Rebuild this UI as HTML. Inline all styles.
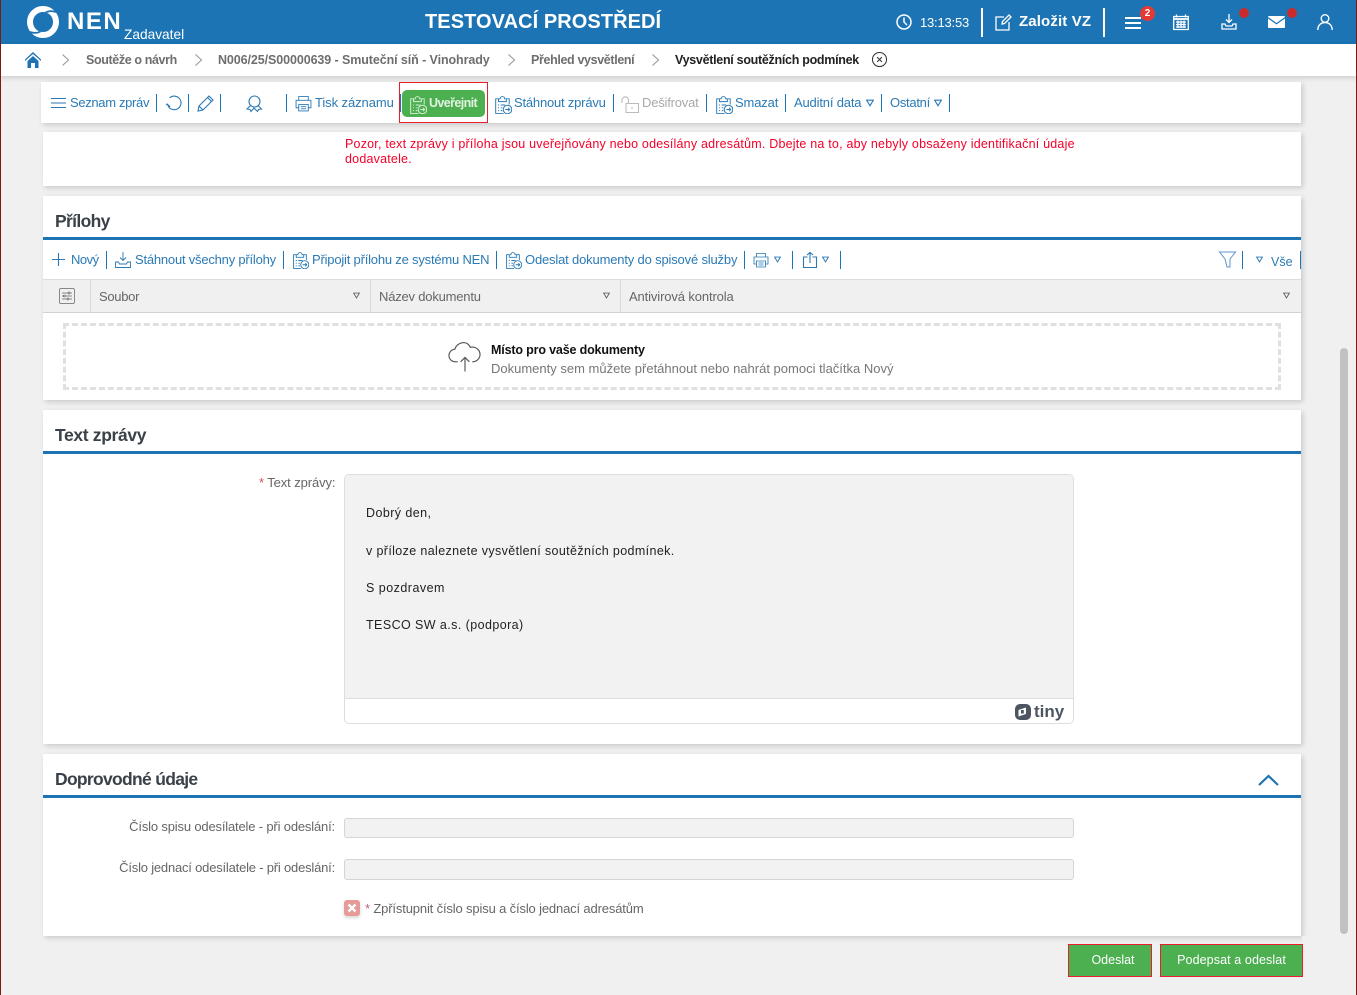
<!DOCTYPE html>
<html lang="cs"><head><meta charset="utf-8"><title>NEN</title>
<style>
html,body{margin:0;padding:0}
body{width:1357px;height:995px;overflow:hidden;position:relative;background:#f0f0f0;font-family:"Liberation Sans",sans-serif;font-size:13px;color:#666}
.a,.t,svg.i,.s{position:absolute}
.t{white-space:nowrap;line-height:16px}
.b{color:#2a7ab5}
.s{width:1px;height:18px;background:#1c74b4}
.h{font-size:17.5px;font-weight:bold;color:#3a4149;line-height:22px}
.bc{font-weight:bold;font-size:12.5px;color:#6e6e6e}
.msg{color:#222;font-size:12.5px}
.panel{position:absolute;background:#fff;box-shadow:2px 2px 5px rgba(0,0,0,.16)}
.line{position:absolute;height:3px;background:#1c74b4}
svg.i{fill:none;stroke:#2a7ab5;stroke-width:1.1;overflow:visible}
.c{stroke-width:.85 !important}
.btn{position:absolute;box-sizing:border-box;background:#4caf50;border:1px solid #ed1c2e;color:#fff;text-align:center;font-size:12.5px;line-height:30px}
.inp{position:absolute;left:344px;width:730px;height:20px;box-sizing:border-box;background:#f2f2f2;border:1px solid #d5d5d5;border-radius:3px}
</style></head><body>
<svg width="0" height="0" style="position:absolute"><defs>
<symbol id="clip" viewBox="0 0 16 16"><path d="M4 2.500H1.500v13h7M11 2.500h2.500v5M4 2.500h1.500a2 2 0 0 1 4 0H11V5H4zM3.500 8h1M3.500 10.500h1M3.500 13h1M6 8h4M6 10.500h1.500M6 13h1.500"/><circle cx="12" cy="12" r="3.800"/><path d="M10 12h4M12.500 10.500 14 12l-1.500 1.500"/></symbol>
<symbol id="print" viewBox="0 0 16 16"><path d="M3.500 5V1.500h9V5M3.500 12H1V5h14v7h-2.500M3.500 9h9v6h-9zM5.500 11h5M5.500 13h5"/></symbol>
<symbol id="tri" viewBox="0 0 8 8"><path d="M.7 1.200h6.600L4 6.800z"/></symbol>
</defs></svg>

<!-- Header -->
<div class="a" style="left:0;top:0;width:1357px;height:44px;background:#1c74b4"></div>
<svg class="i" style="left:26px;top:5px;stroke:none" width="34" height="34" viewBox="0 0 34 34"><circle cx="17" cy="17" r="13" fill="none" stroke="#fff" stroke-width="6"/><path d="M30 7Q24 5 19.500 7.500M4 27Q10 29 14.500 26.500" fill="none" stroke="#1c74b4" stroke-width="1.800"/></svg>
<div class="t" style="left:67px;top:9px;font-size:24px;line-height:26px;font-weight:bold;color:#fff;letter-spacing:1.500px">NEN</div>
<div class="t" style="left:124px;top:27px;font-size:13.700px;color:#fff">Zadavatel</div>
<div class="t" style="left:425px;top:10px;font-size:20px;line-height:24px;font-weight:bold;color:#fff;letter-spacing:.07px">TESTOVACÍ PROSTŘEDÍ</div>
<svg class="i" style="left:896px;top:14px;stroke:#fff;stroke-width:1.500" width="16" height="16" viewBox="0 0 16 16"><circle cx="8" cy="8" r="7"/><path d="M8 3.500V8l3 3"/></svg>
<div class="t" style="left:920px;top:15px;color:#fff;letter-spacing:-.2px">13:13:53</div>
<div class="a" style="left:981px;top:8px;width:2px;height:29px;background:#fff"></div>
<svg class="i" style="left:995px;top:14px;stroke:#fff;stroke-width:1.300" width="17" height="17" viewBox="0 0 17 17"><path d="M9 3H1v13h13V8M7 10l.500-2.500L14 1l2 2-6.500 6.500z"/></svg>
<div class="t" style="left:1019px;top:13px;font-size:15px;line-height:18px;font-weight:bold;color:#fff;letter-spacing:.13px">Založit VZ</div>
<div class="a" style="left:1103px;top:8px;width:2px;height:29px;background:#fff"></div>
<div class="a" style="left:1125px;top:17px;width:16px;height:2px;background:#fff;box-shadow:0 5px 0 #fff,0 10px 0 #fff"></div>
<div class="a" style="left:1140px;top:6px;width:15px;height:15px;border-radius:50%;background:#e53935;color:#fff;font-size:10px;font-weight:bold;line-height:15px;text-align:center">2</div>
<svg class="i" style="left:1173px;top:14px;stroke:#fff;stroke-width:1.300" width="16" height="16" viewBox="0 0 16 16"><path d="M.7 2.500h14.600v13H.7zM3.500.5v3M12.500.5v3" /><path d="M.7 5h14.600" stroke-width="1.800"/><path d="M3 8h10M3 10.500h10M3 13h10M5 6.500V14M8 6.500V14M11 6.500V14"/></svg>
<svg class="i" style="left:1221px;top:14px;stroke:#fff;stroke-width:1.300" width="16" height="16" viewBox="0 0 16 16"><path d="M8 0v8M5 5.500 8 8.500l3-3M1 10v5h14v-5h-3l-1 2H5l-1-2z"/></svg>
<div class="a" style="left:1239px;top:8px;width:10px;height:10px;border-radius:50%;background:#cc2b2b"></div>
<svg class="i" style="left:1268px;top:16px;stroke:none" width="17" height="12" viewBox="0 0 17 12"><path d="M1 0h15a1 1 0 0 1 1 1L8.500 7 0 1a1 1 0 0 1 1-1zM0 2.500l8.500 6 8.500-6V11a1 1 0 0 1-1 1H1a1 1 0 0 1-1-1z" fill="#fff"/></svg>
<div class="a" style="left:1287px;top:8px;width:10px;height:10px;border-radius:50%;background:#cc2b2b"></div>
<svg class="i" style="left:1317px;top:14px;stroke:#fff;stroke-width:1.400" width="16" height="16" viewBox="0 0 16 16"><circle cx="8" cy="4.500" r="3.800"/><path d="M.8 16c0-4.500 3-7.500 7.200-7.500s7.200 3 7.200 7.500"/></svg>

<!-- Breadcrumb -->
<div class="a" style="left:0;top:44px;width:1357px;height:32px;background:#fff;box-shadow:0 2px 5px rgba(0,0,0,.15)"></div>
<svg class="i" style="left:25px;top:52px;stroke:none" width="16" height="16" viewBox="0 0 16 16"><path d="M8 0 0 7.500v1.500L8 2l8 7V7.500z" fill="#1c74b4"/><path d="M2.500 9 8 4l5.500 5v7H10v-5H6v5H2.500z" fill="#1c74b4"/></svg>
<svg class="i" style="left:62px;top:54px;stroke:#999" width="7" height="12" viewBox="0 0 7 12"><path d="m.5.500 6 5.500-6 5.500"/></svg>
<div class="t bc" style="left:86px;top:52px;letter-spacing:-.38px">Soutěže o návrh</div>
<svg class="i" style="left:195px;top:54px;stroke:#999" width="7" height="12" viewBox="0 0 7 12"><path d="m.5.500 6 5.500-6 5.500"/></svg>
<div class="t bc" style="left:218px;top:52px;letter-spacing:-.09px">N006/25/S00000639 - Smuteční síň - Vinohrady</div>
<svg class="i" style="left:508px;top:54px;stroke:#999" width="7" height="12" viewBox="0 0 7 12"><path d="m.5.500 6 5.500-6 5.500"/></svg>
<div class="t bc" style="left:531px;top:52px;letter-spacing:-.36px">Přehled vysvětlení</div>
<svg class="i" style="left:652px;top:54px;stroke:#999" width="7" height="12" viewBox="0 0 7 12"><path d="m.5.500 6 5.500-6 5.500"/></svg>
<div class="t bc" style="left:675px;top:52px;color:#222;letter-spacing:-.29px">Vysvětlení soutěžních podmínek</div>
<svg class="i" style="left:872px;top:52px;stroke:#333" width="15" height="15" viewBox="0 0 16 16"><circle cx="8" cy="8" r="7.500"/><path d="m5.500 5.500 5 5m0-5-5 5"/></svg>

<!-- Main toolbar -->
<div class="panel" style="left:41px;top:82px;width:1260px;height:41px"></div>
<div class="a" style="left:51px;top:98px;width:15px;height:1px;background:#2a7ab5;box-shadow:0 4.500px 0 #2a7ab5,0 9px 0 #2a7ab5"></div>
<div class="t b" style="left:70px;top:95px;letter-spacing:-.33px">Seznam zpráv</div>
<div class="s" style="left:156px;top:94px"></div>
<svg class="i" style="left:166px;top:95px" width="16" height="16" viewBox="0 0 16 16"><path d="M3.500 3a6.800 6.800 0 1 1-2 6M.8 8.800l3.200 3M.8 8.800l-.6 1"/></svg>
<div class="s" style="left:188px;top:94px"></div>
<svg class="i" style="left:197px;top:95px" width="17" height="17" viewBox="0 0 17 17"><path d="M1 16 2 11 12 1l4 4L6 15zM2 11l4 4M10.500 2.500l4 4"/></svg>
<div class="s" style="left:220px;top:94px"></div>
<svg class="i" style="left:246px;top:95px" width="17" height="17" viewBox="0 0 17 17"><circle cx="8.500" cy="6.500" r="5.500"/><path d="M4.500 10.500 1 14l3 .5 1 2 3-3.500 3.500 3.500 1-2 3-.5-3.500-3.500"/></svg>
<div class="s" style="left:286px;top:94px"></div>
<svg class="i c" style="left:295px;top:95px" width="17" height="17"><use href="#print"/></svg>
<div class="t b" style="left:315px;top:95px;letter-spacing:-.08px">Tisk záznamu</div>
<div class="s" style="left:400px;top:94px"></div>
<div class="a" style="left:399px;top:82px;width:87px;height:39px;border:1px solid #e5202e"></div>
<div class="a" style="left:402px;top:90px;width:83px;height:27px;border-radius:5px;background:#4caf50"></div>
<svg class="i c" style="left:409px;top:96px;stroke:#d9efd9" width="18" height="18" viewBox="0 0 16 16"><use href="#clip"/></svg>
<div class="t" style="left:429px;top:95px;font-size:12.500px;font-weight:bold;color:#e2f2e2;letter-spacing:-.6px">Uveřejnit</div>
<svg class="i c" style="left:494px;top:96px" width="18" height="18"><use href="#clip"/></svg>
<div class="t b" style="left:514px;top:95px;letter-spacing:-.2px">Stáhnout zprávu</div>
<div class="s" style="left:613px;top:94px"></div>
<svg class="i" style="left:621px;top:96px;stroke:#bbb" width="18" height="17" viewBox="0 0 18 17"><path d="M5 7.500h12.500v9H5zM1 7V4a3.200 3.200 0 0 1 6.400 0v3.500M11 11v2"/></svg>
<div class="t" style="left:642px;top:95px;color:#a9a9a9;letter-spacing:-.2px">Dešifrovat</div>
<div class="s" style="left:706px;top:94px"></div>
<svg class="i c" style="left:715px;top:96px" width="18" height="18"><use href="#clip"/></svg>
<div class="t b" style="left:735px;top:95px;letter-spacing:-.15px">Smazat</div>
<div class="s" style="left:785px;top:94px"></div>
<div class="t b" style="left:794px;top:95px;letter-spacing:-.17px">Auditní data</div>
<svg class="i" style="left:866px;top:99px" width="8" height="8"><use href="#tri"/></svg>
<div class="s" style="left:881px;top:94px"></div>
<div class="t b" style="left:890px;top:95px;letter-spacing:-.28px">Ostatní</div>
<svg class="i" style="left:934px;top:99px" width="8" height="8"><use href="#tri"/></svg>
<div class="s" style="left:949px;top:94px"></div>

<!-- Warning panel -->
<div class="panel" style="left:43px;top:132px;width:1258px;height:54px"></div>
<div class="t" style="left:345px;top:137px;color:#f4002a;font-size:12.500px;line-height:15px;letter-spacing:.205px">Pozor, text zprávy i příloha jsou uveřejňovány nebo odesílány adresátům. Dbejte na to, aby nebyly obsaženy identifikační údaje<br>dodavatele.</div>

<!-- Přílohy -->
<div class="panel" style="left:43px;top:196px;width:1258px;height:204px"></div>
<div class="t h" style="left:55px;top:210px;letter-spacing:-.65px">Přílohy</div>
<div class="line" style="left:43px;top:237px;width:1258px"></div>
<svg class="i" style="left:52px;top:253px" width="13" height="13" viewBox="0 0 13 13"><path d="M6.500 0v13M0 6.500h13"/></svg>
<div class="t b" style="left:71px;top:252px;letter-spacing:-.5px">Nový</div>
<div class="s" style="left:106px;top:251px"></div>
<svg class="i" style="left:115px;top:252px;stroke-width:.9" width="16" height="16" viewBox="0 0 16 16"><path d="M8 0v8M5 5.500 8 8.500l3-3M.5 10v5.500h15V10h-3l-1 2h-7l-1-2z"/></svg>
<div class="t b" style="left:135px;top:252px;letter-spacing:-.21px">Stáhnout všechny přílohy</div>
<div class="s" style="left:283px;top:251px"></div>
<svg class="i c" style="left:292px;top:252px" width="17" height="17"><use href="#clip"/></svg>
<div class="t b" style="left:312px;top:252px;letter-spacing:-.2px">Připojit přílohu ze systému NEN</div>
<div class="s" style="left:496px;top:251px"></div>
<svg class="i c" style="left:505px;top:252px" width="17" height="17"><use href="#clip"/></svg>
<div class="t b" style="left:525px;top:252px;letter-spacing:-.17px">Odeslat dokumenty do spisové služby</div>
<div class="s" style="left:744px;top:251px"></div>
<svg class="i c" style="left:753px;top:252px" width="16" height="16"><use href="#print"/></svg>
<svg class="i" style="left:774px;top:256px" width="7" height="7"><use href="#tri"/></svg>
<div class="s" style="left:792px;top:251px"></div>
<svg class="i" style="left:803px;top:252px" width="14" height="16" viewBox="0 0 14 16"><path d="M7 11V.5M4 3l3-2.500L10 3M4.500 5H.5v10.500h13V5h-4"/></svg>
<svg class="i" style="left:822px;top:256px" width="7" height="7"><use href="#tri"/></svg>
<div class="s" style="left:840px;top:251px"></div>
<svg class="i" style="left:1219px;top:251px;stroke-width:1;stroke:#5f93cd" width="17" height="17" viewBox="0 0 17 17"><path d="M.5 1h16L11 8v8H8L6 8z"/></svg>
<div class="s" style="left:1242px;top:251px"></div>
<svg class="i" style="left:1256px;top:256px" width="7" height="7"><use href="#tri"/></svg>
<div class="t b" style="left:1271px;top:254px;font-size:12.500px">Vše</div>
<div class="s" style="left:1300px;top:251px"></div>

<div class="a" style="left:43px;top:279px;width:1258px;height:34px;box-sizing:border-box;background:#f0f0f0;border-top:1px solid #dcdcdc;border-bottom:1px solid #d2d2d2"></div>
<div class="a" style="left:90px;top:280px;width:1px;height:32px;background:#d8d8d8"></div>
<div class="a" style="left:370px;top:280px;width:1px;height:32px;background:#d8d8d8"></div>
<div class="a" style="left:620px;top:280px;width:1px;height:32px;background:#d8d8d8"></div>
<svg class="i" style="left:59px;top:288px;stroke:#666;stroke-width:.75" width="16" height="16" viewBox="0 0 16 16"><rect x=".5" y=".5" width="15" height="15" rx="1.500"/><path d="M3 5h6M11.500 5H13M3 8h1.500M7 8h6M3 11h5M10.500 11H13"/><circle cx="10" cy="5" r="1"/><circle cx="5.500" cy="8" r="1"/><circle cx="9" cy="11" r="1"/></svg>
<div class="t" style="left:99px;top:289px;letter-spacing:-.3px">Soubor</div>
<svg class="i" style="left:353px;top:292px;stroke:#666" width="7" height="7"><use href="#tri"/></svg>
<div class="t" style="left:379px;top:289px;letter-spacing:-.2px">Název dokumentu</div>
<svg class="i" style="left:603px;top:292px;stroke:#666" width="7" height="7"><use href="#tri"/></svg>
<div class="t" style="left:629px;top:289px;letter-spacing:-.12px">Antivirová kontrola</div>
<svg class="i" style="left:1283px;top:292px;stroke:#666" width="7" height="7"><use href="#tri"/></svg>

<div class="a" style="left:63px;top:323px;width:1218px;height:67px;box-sizing:border-box;border:3px dashed #e0e0e0"></div>
<svg class="i" style="left:449px;top:339px;stroke:#555;stroke-width:1.200" width="32" height="33" viewBox="0 0 33 33"><path d="M9 23H7a6.500 6.500 0 0 1-1-13C8 3 18 0 22 8c6-1 10 3 10 7.500S28 23 24 23"/><path d="M16.500 33V19M12 23l4.500-4.500L21 23"/></svg>
<div class="t" style="left:491px;top:342px;font-weight:bold;font-size:12.500px;color:#111;letter-spacing:-.16px">Místo pro vaše dokumenty</div>
<div class="t" style="left:491px;top:361px;color:#777">Dokumenty sem můžete přetáhnout nebo nahrát pomoci tlačítka Nový</div>

<!-- Text zprávy -->
<div class="panel" style="left:43px;top:410px;width:1258px;height:334px"></div>
<div class="t h" style="left:55px;top:424px;letter-spacing:-.35px">Text zprávy</div>
<div class="line" style="left:43px;top:451px;width:1258px"></div>
<div class="t" style="left:259px;top:475px;width:76px;text-align:right;letter-spacing:-.1px"><span style="color:#d9534f">*</span> Text zprávy:</div>
<div class="a" style="left:344px;top:474px;width:730px;height:250px;box-sizing:border-box;border:1px solid #dedede;border-radius:5px;background:#fff;overflow:hidden">
<div class="a" style="left:0;top:0;width:728px;height:223px;background:#f2f2f2;border-bottom:1px solid #dedede"></div>
</div>
<div class="t msg" style="left:366px;top:505px;letter-spacing:.42px">Dobrý den,</div>
<div class="t msg" style="left:366px;top:543px;letter-spacing:.37px">v příloze naleznete vysvětlení soutěžních podmínek.</div>
<div class="t msg" style="left:366px;top:580px;letter-spacing:.48px">S pozdravem</div>
<div class="t msg" style="left:366px;top:617px;letter-spacing:.42px">TESCO SW a.s. (podpora)</div>
<svg class="i" style="left:1015px;top:704px;stroke:none" width="16" height="16" viewBox="0 0 16 16"><rect x="0" y="0" width="16" height="16" rx="5" fill="#4c5663"/><path d="M3.500 6 11 3.500v6.500L3.500 12.500z" fill="#fff"/><rect x="6" y="6" width="2.800" height="3.500" fill="#4c5663"/></svg>
<div class="t" style="left:1034px;top:702px;font-size:17px;line-height:20px;font-weight:bold;color:#4c5663">tiny</div>

<!-- Doprovodné údaje -->
<div class="panel" style="left:43px;top:754px;width:1258px;height:182px"></div>
<div class="t h" style="left:55px;top:768px;letter-spacing:-.7px">Doprovodné údaje</div>
<div class="line" style="left:43px;top:795px;width:1258px"></div>
<svg class="i" style="left:1258px;top:774px;stroke-width:2.200;stroke:#1c74b4" width="21" height="12" viewBox="0 0 21 12"><path d="M1 11 10.500 2 20 11"/></svg>
<div class="t" style="left:80px;top:819px;width:255px;text-align:right;letter-spacing:-.17px">Číslo spisu odesílatele - při odeslání:</div>
<div class="inp" style="top:818px"></div>
<div class="t" style="left:80px;top:860px;width:255px;text-align:right;letter-spacing:-.2px">Číslo jednací odesílatele - při odeslání:</div>
<div class="inp" style="top:859px;height:21px"></div>
<div class="a" style="left:344px;top:900px;width:16px;height:16px;border-radius:3px;background:#e79a9a;box-shadow:0 2px 3px rgba(0,0,0,.15)"></div>
<svg class="i" style="left:348px;top:904px;stroke:#fff;stroke-width:2.400" width="8" height="8" viewBox="0 0 8 8"><path d="m.5.500 7 7m0-7-7 7"/></svg>
<div class="t" style="left:365px;top:901px;letter-spacing:-.15px"><span style="color:#c2607a">*</span> Zpřístupnit číslo spisu a číslo jednací adresátům</div>

<!-- Scrollbar / page edges -->
<div class="a" style="left:1340px;top:348px;width:8px;height:586px;border-radius:4px;background:#c1c1c1"></div>
<div class="a" style="left:1302px;top:936px;width:38px;height:59px;background:#f0f0f0"></div>
<div class="a" style="left:0;top:0;width:1px;height:995px;background:#7a1b12"></div>
<div class="a" style="left:1356px;top:0;width:1px;height:995px;background:#7a1b12"></div>

<!-- Bottom buttons -->
<div class="btn" style="left:1068px;top:944px;width:84px;height:33px;padding-left:6px">Odeslat</div>
<div class="btn" style="left:1160px;top:944px;width:143px;height:33px;letter-spacing:.1px">Podepsat a odeslat</div>
</body></html>
